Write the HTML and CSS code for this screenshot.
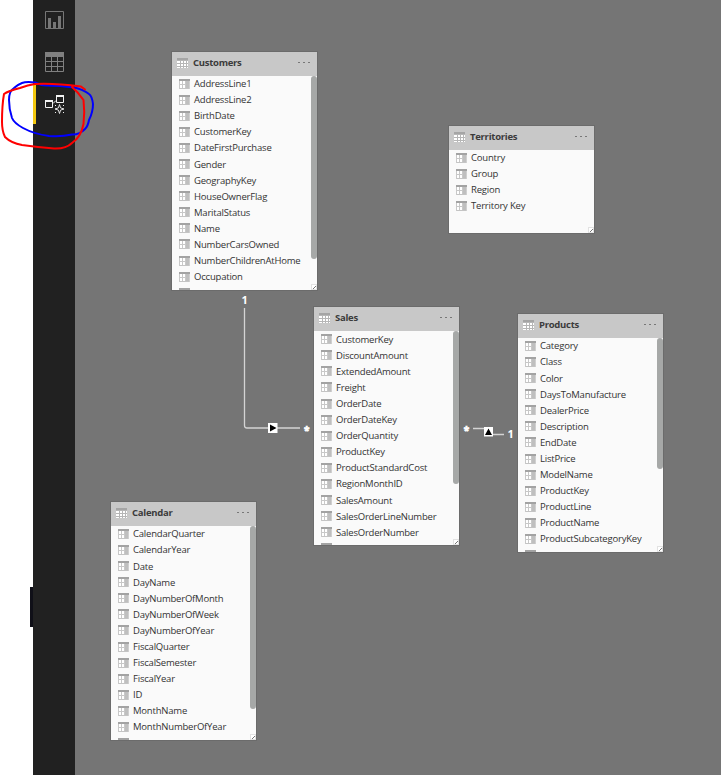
FILE: index.html
```html
<!DOCTYPE html>
<html lang="en">
<head>
<meta charset="utf-8">
<title>Model view</title>
<link rel="stylesheet" href="styles.css">
</head>
<body>
<div class="app">
  <div class="margin"><div class="handle"></div></div>
  <nav class="rail">
    <a class="view"><svg width="19" height="18" viewBox="0 0 19 18"><path d="M.5.5h18v17H.5z" fill="none" stroke="#777"/><path d="M3 7h3v10H3zM8 11h3v6H8zM13 5h3v12h-3z" fill="#777"/></svg></a>
    <a class="view"><svg width="19" height="20" viewBox="0 0 19 20"><path d="M.5.5h18v19H.5z" fill="none" stroke="#808080"/><path d="M0 0h19v5H0z" fill="#808080"/><path d="M6.500 5v15M12.500 5v15M0 9.500h19M0 14.500h19" stroke="#808080"/></svg></a>
    <a class="view active"><svg width="20" height="20" viewBox="0 0 20 20" fill="none" stroke="#f2f2f2"><path d="M.5 6.500h7v6H.5zM11.500 1.500h7v6h-7z"/><path d="M0 6h8M11 1h8" stroke-width="2"/><path d="M8 8.500l3-3"/><path d="M14.500 9.500l1.100 3.400 3.400 1.100-3.400 1.100-1.100 3.400-1.100-3.400L10 14l3.400-1.100z" stroke-width=".9"/><path d="M10 10.500h1M18 10.500h1M10 17.500h1M18 17.500h1"/></svg></a>
  </nav>
  <main class="canvas">
    <svg class="links" width="721" height="775">
      <g fill="none" stroke="#d4d4d4" stroke-width="1.300"><path d="M244.500 308V425.500q0 2.500 2.500 2.500H300M473 428.500h15v6h16"/></g>
      <path d="M268 423h9.500v10H268zM484 427h9v9.500h-9z" fill="#fff"/>
      <path d="M270 424.500l6.500 3.500-6.500 3.500zM485 435l3.500-6.500 3.500 6.500z" fill="#000"/>
      <g class="ends"><text x="241.500" y="303.500">1</text><text x="507.500" y="438">1</text></g>
      <g class="stars"><text x="304" y="434">*</text><text x="463.800" y="434">*</text></g>
    </svg>
    <section class="table customers">
      <header><i class="grid"></i><h2>Customers</h2><span class="more"><b></b><b></b><b></b></span></header>
      <ul><li>AddressLine1</li><li>AddressLine2</li><li>BirthDate</li><li>CustomerKey</li><li>DateFirstPurchase</li><li>Gender</li><li>GeographyKey</li><li>HouseOwnerFlag</li><li>MaritalStatus</li><li>Name</li><li>NumberCarsOwned</li><li>NumberChildrenAtHome</li><li>Occupation</li><li></li></ul>
      <div class="thumb"></div><div class="grip"></div>
    </section>
    <section class="table territories">
      <header><i class="grid"></i><h2>Territories</h2><span class="more"><b></b><b></b><b></b></span></header>
      <ul><li>Country</li><li>Group</li><li>Region</li><li>Territory Key</li></ul>
      <div class="grip"></div>
    </section>
    <section class="table sales">
      <header><i class="grid"></i><h2>Sales</h2><span class="more"><b></b><b></b><b></b></span></header>
      <ul><li>CustomerKey</li><li>DiscountAmount</li><li>ExtendedAmount</li><li>Freight</li><li>OrderDate</li><li>OrderDateKey</li><li>OrderQuantity</li><li>ProductKey</li><li>ProductStandardCost</li><li>RegionMonthID</li><li>SalesAmount</li><li>SalesOrderLineNumber</li><li>SalesOrderNumber</li><li></li></ul>
      <div class="thumb"></div><div class="grip"></div>
    </section>
    <section class="table products">
      <header><i class="grid"></i><h2>Products</h2><span class="more"><b></b><b></b><b></b></span></header>
      <ul><li>Category</li><li>Class</li><li>Color</li><li>DaysToManufacture</li><li>DealerPrice</li><li>Description</li><li>EndDate</li><li>ListPrice</li><li>ModelName</li><li>ProductKey</li><li>ProductLine</li><li>ProductName</li><li>ProductSubcategoryKey</li><li></li></ul>
      <div class="thumb"></div><div class="grip"></div>
    </section>
    <section class="table calendar">
      <header><i class="grid"></i><h2>Calendar</h2><span class="more"><b></b><b></b><b></b></span></header>
      <ul><li>CalendarQuarter</li><li>CalendarYear</li><li>Date</li><li>DayName</li><li>DayNumberOfMonth</li><li>DayNumberOfWeek</li><li>DayNumberOfYear</li><li>FiscalQuarter</li><li>FiscalSemester</li><li>FiscalYear</li><li>ID</li><li>MonthName</li><li>MonthNumberOfYear</li><li></li></ul>
      <div class="thumb"></div><div class="grip"></div>
    </section>
  </main>
  <svg class="ink" width="110" height="160" fill="none" stroke-width="2" stroke-linecap="round" stroke-linejoin="round">
    <path stroke="#00f" d="M35 82.500Q26 81.500 22 83 17 85 14 88 9 91 9 100 9 109 12 118 14 123 23 128 34 134 49 136 61 137 72 134.500 79 135 85 129 88 126 89 120 93 112 93 104 92 96 89 94 82 89 74 87.500 60 85.500 46 85.500 40 85 35 82.500"/>
    <path stroke="#f00" d="M35 84Q28 85 20 88 8 91 4 94 2 105 2 122 2 131 5 137 11 143 22 145 38 147 54 148.500 66 149 72 143 81 137 83.500 124 85 112 83.500 100 78 92 72 87M35 84Q54 83 81 86.500L85 89.500"/>
  </svg>
</div>
</body>
</html>
```
FILE: styles.css
```css
* { box-sizing: border-box; }
body { margin: 0; font-family: "Open Sans", "Noto Sans", sans-serif; background: #fff; }
.app { position: relative; display: flex; width: 721px; height: 775px; overflow: hidden; }
.margin { width: 33px; display: flex; justify-content: flex-end; padding-top: 587px; }
.handle { width: 3px; height: 40px; background: #101018; }
.rail { width: 42px; background: #212121; display: flex; flex-direction: column; }
.view { height: 44px; padding-left: 12px; display: flex; align-items: center; }
.view:first-child { height: 40px; }
.view.active { height: 40px; border-left: 3px solid #f2c811; padding: 2px 0 0 9px; }
.canvas { flex: 1; background: #757575; }
.links, .ink { position: absolute; left: 0; top: 0; pointer-events: none; }
.ink { z-index: 5; }
.ends { font-size: 11px; font-weight: 700; fill: #fff; }
.stars { font-size: 10px; font-weight: 700; fill: #fff; stroke: #fff; stroke-width: .7px; }

.table { position: absolute; width: 145px; height: 238px; background: #fafafa; overflow: hidden; outline: 1px solid #6b6b6b; }
.customers { left: 172px; top: 52px; }
.territories { left: 449px; top: 126px; height: 107px; }
.sales { left: 314px; top: 307px; }
.products { left: 518px; top: 314px; }
.calendar { left: 111px; top: 502px; }
.table header { height: 24px; background: #c8c8c8; display: flex; align-items: center; padding: 0 6px 2px 5px; }
.table h2 { margin: 0 auto 0 5px; font-size: 9.5px; line-height: 14px; font-weight: 700; letter-spacing: -.27px; color: #3b3b3b; }
.grid { width: 11px; height: 10px; margin-top: -1px; background:
  linear-gradient(#a5a5a5, #a5a5a5) 0 0 / 11px 2px no-repeat,
  repeating-linear-gradient(90deg, transparent 0 2px, #b6b6b6 2px 3px) 1px 0,
  repeating-linear-gradient(transparent 0 2px, #b6b6b6 2px 3px) 0 0, #fff; }
.more { display: flex; gap: 3px; margin: -1px 1px 0 0; }
.more b { width: 2px; height: 1px; background: #777; }
.table ul { margin: 0; padding: 0 0 0 7px; list-style: none; }
.sales ul { padding-top: .6px; }
.products ul, .calendar ul { padding-top: .3px; }
.table li { height: 16.1px; display: flex; align-items: center; gap: 4px; font-size: 9.5px; line-height: 14px; letter-spacing: -.2px; color: #333; white-space: nowrap; }
.table li::before { content: ""; width: 11px; height: 10px; margin-top: -1px; flex: none; background:
  linear-gradient(#a3a3a3, #a3a3a3) 0 0 / 11px 2px no-repeat,
  linear-gradient(#bfbfbf, #bfbfbf) 7px 2px / 3px 7px no-repeat,
  linear-gradient(#c8c8c8, #c8c8c8) 0 0 / 1px 10px no-repeat,
  linear-gradient(#d0d0d0, #d0d0d0) 10px 0 / 1px 10px no-repeat,
  linear-gradient(#c4c4c4, #c4c4c4) 0 9px / 11px 1px no-repeat,
  linear-gradient(#c8c8c8, #c8c8c8) 3px 2px / 1px 8px no-repeat,
  linear-gradient(#c8c8c8, #c8c8c8) 6px 2px / 1px 8px no-repeat,
  linear-gradient(#c8c8c8, #c8c8c8) 0 5px / 7px 1px no-repeat, #fff; }
.thumb { position: absolute; right: 0; top: 24px; width: 6px; height: 183px; border-radius: 3px; background: #a6a8a7; }
.sales .thumb { height: 153px; }
.products .thumb { height: 131px; }
.grip { position: absolute; right: 0; bottom: 0; width: 6px; height: 6px; border: 1px solid #e2e2e2; background: linear-gradient(135deg, #fff 0 60%, #777 60% 75%, #fff 75%); }
```
